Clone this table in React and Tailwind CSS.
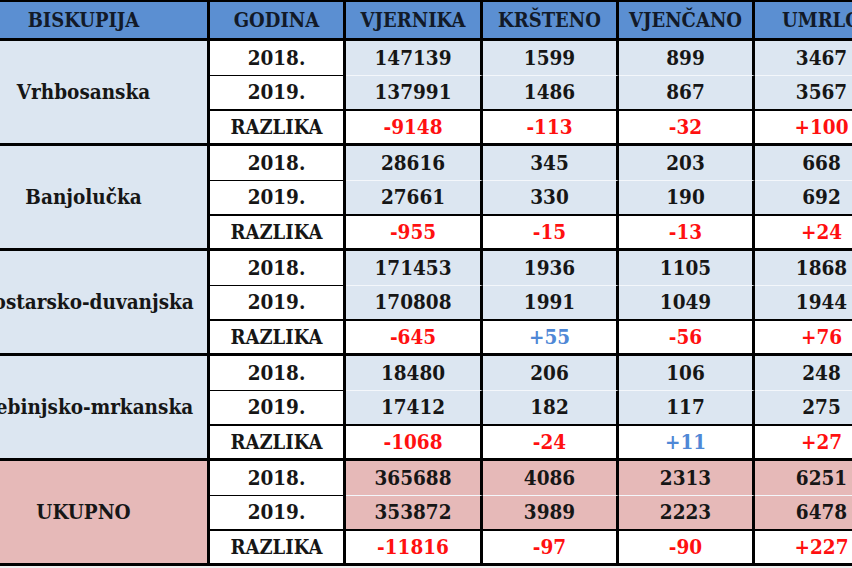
const groups = [
    {
        name: 'Vrhbosanska',
        total: false,
        y2018: ['147139', '1599', '899', '3467'],
        y2019: ['137991', '1486', '867', '3567'],
        diff: ['-9148', '-113', '-32', '+100'],
    },
    {
        name: 'Banjolučka',
        total: false,
        y2018: ['28616', '345', '203', '668'],
        y2019: ['27661', '330', '190', '692'],
        diff: ['-955', '-15', '-13', '+24'],
    },
    {
        name: 'Mostarsko-duvanjska',
        total: false,
        y2018: ['171453', '1936', '1105', '1868'],
        y2019: ['170808', '1991', '1049', '1944'],
        diff: ['-645', '+55', '-56', '+76'],
        blue: [1],
    },
    {
        name: 'Trebinjsko-mrkanska',
        total: false,
        y2018: ['18480', '206', '106', '248'],
        y2019: ['17412', '182', '117', '275'],
        diff: ['-1068', '-24', '+11', '+27'],
        blue: [2],
    },
    {
        name: 'UKUPNO',
        total: true,
        y2018: ['365688', '4086', '2313', '6251'],
        y2019: ['353872', '3989', '2223', '6478'],
        diff: ['-11816', '-97', '-90', '+227'],
    },
];

const headers = ['BISKUPIJA', 'GODINA', 'VJERNIKA', 'KRŠTENO', 'VJENČANO', 'UMRLO'];

const cell = 'flex items-center justify-center whitespace-nowrap border-r-[3px] border-black';

const Group = ({ g }) => {
    const fill = g.total ? 'bg-[#e6b9b8]' : 'bg-[#dce6f1]';
    return (
        <>
            <div className={`${cell} row-span-3 border-b-[3px] ${fill} text-[20.5px]`}>
                {g.name}
            </div>
            <div className={`${cell} border-b border-b-black bg-white`}>2018.</div>
            {g.y2018.map((v, i) => (
                <div key={'a' + i} className={`${cell} border-b border-b-[#f4f7fb] ${fill}`}>
                    {v}
                </div>
            ))}
            <div className={`${cell} border-b-2 bg-white`}>2019.</div>
            {g.y2019.map((v, i) => (
                <div key={'b' + i} className={`${cell} border-b-2 ${fill}`}>
                    {v}
                </div>
            ))}
            <div className={`${cell} border-b-[3px] bg-white text-[20px]`}>RAZLIKA</div>
            {g.diff.map((v, i) => (
                <div
                    key={'c' + i}
                    className={`${cell} border-b-[3px] bg-white ${
                        g.blue && g.blue.includes(i) ? 'text-[#4f88d6]' : 'text-[#ff1010]'
                    }`}
                >
                    {v}
                </div>
            ))}
        </>
    );
};

export default function App() {
    return (
        <div className="h-[568px] w-[852px] overflow-hidden bg-[#efefef]">
            <div
                className="ml-[-40px] grid w-[931px] grid-cols-[250px_136px_137px_136px_136px_136px] grid-rows-[39px_repeat(15,35px)] border-t-2 border-black text-[20.5px] font-bold text-[#161616]"
                style={{ fontFamily: '"DejaVu Serif Condensed", "DejaVu Serif", serif' }}
            >
                {headers.map((h) => (
                    <div
                        key={h}
                        className={`${cell} border-b-[3px] bg-[#5b8fd2] text-[20px] text-[#121a28]`}
                    >
                        {h}
                    </div>
                ))}
                {groups.map((g) => (
                    <Group key={g.name} g={g} />
                ))}
            </div>
        </div>
    );
}
